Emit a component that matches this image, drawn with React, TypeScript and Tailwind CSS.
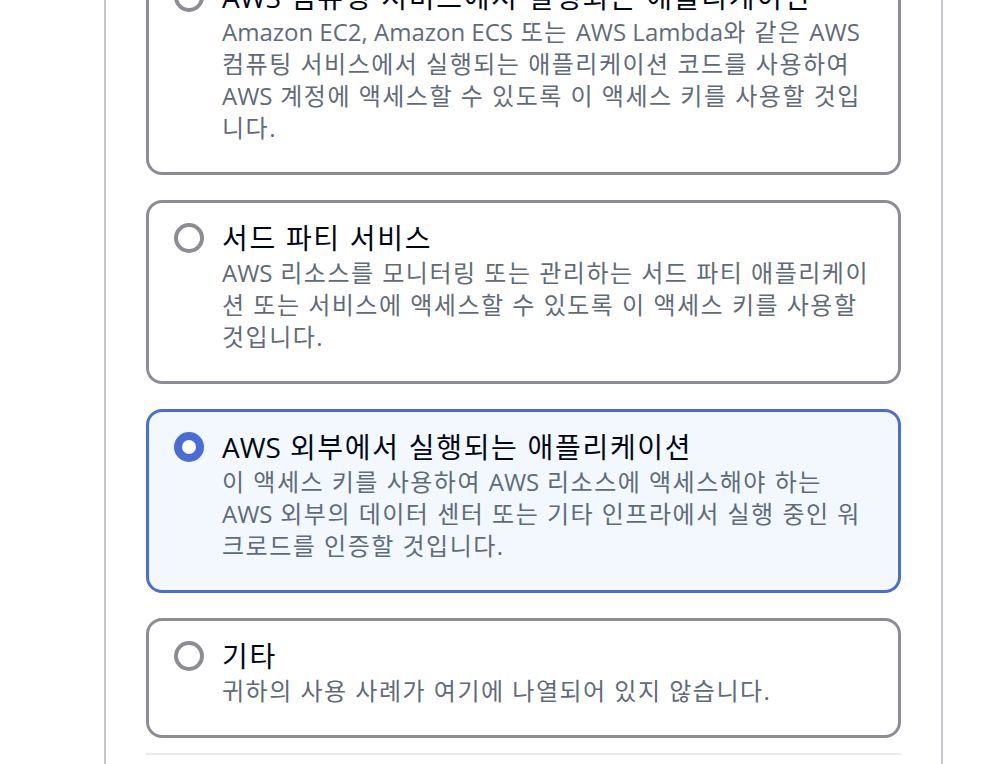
import React from "react";

type Opt = { title: string; desc: string; selected?: boolean };

const options: Opt[] = [
  {
    title: "AWS 컴퓨팅 서비스에서 실행되는 애플리케이션",
    desc: "Amazon EC2, Amazon ECS 또는 AWS Lambda와 같은 AWS 컴퓨팅 서비스에서 실행되는 애플리케이션 코드를 사용하여 AWS 계정에 액세스할 수 있도록 이 액세스 키를 사용할 것입니다.",
  },
  {
    title: "서드 파티 서비스",
    desc: "AWS 리소스를 모니터링 또는 관리하는 서드 파티 애플리케이션 또는 서비스에 액세스할 수 있도록 이 액세스 키를 사용할 것입니다.",
  },
  {
    title: "AWS 외부에서 실행되는 애플리케이션",
    desc: "이 액세스 키를 사용하여 AWS 리소스에 액세스해야 하는 AWS 외부의 데이터 센터 또는 기타 인프라에서 실행 중인 워크로드를 인증할 것입니다.",
    selected: true,
  },
  {
    title: "기타",
    desc: "귀하의 사용 사례가 여기에 나열되어 있지 않습니다.",
  },
];

// Latin runs keep normal spacing; Hangul runs get wider tracking (as in the reference font)
function Mixed({ text }: { text: string }) {
  const parts = text.split(/([A-Za-z0-9,]+(?: [A-Za-z0-9,]+)*)/);
  return (
    <>
      {parts.map((p, i) =>
        i % 2 === 1 ? (
          <span key={i} className="tracking-normal">
            {p}
          </span>
        ) : (
          <React.Fragment key={i}>{p}</React.Fragment>
        )
      )}
    </>
  );
}

function Card({ o }: { o: Opt }) {
  return (
    <div
      className={
        o.selected
          ? "flex rounded-[16px] border-[3px] border-[#4a6cd6] bg-[#f2f8fd] pt-[16px] pb-[28px] pl-[25px] pr-[25px]"
          : "flex rounded-[16px] border-[3px] border-[#8c8c94] bg-white pt-[16px] pb-[28px] pl-[25px] pr-[25px]"
      }
    >
      <div className="mt-[4px] shrink-0">
        {o.selected ? (
          <div className="flex h-[30px] w-[30px] items-center justify-center rounded-full bg-[#4a6cd6]">
            <div className="h-[14px] w-[14px] rounded-full bg-white" />
          </div>
        ) : (
          <div className="h-[30px] w-[30px] rounded-full border-[4px] border-[#8c8c94] bg-white" />
        )}
      </div>
      <div className="ml-[18px] flex-1">
        <div className="text-[28px] leading-[38px] tracking-[1.7px] text-[#000716]">
          <Mixed text={o.title} />
        </div>
        <div className="text-[24px] leading-[32px] tracking-[1.5px] text-[#5f6b7a]">
          <Mixed text={o.desc} />
        </div>
      </div>
    </div>
  );
}

export default function App() {
  return (
    <div
      className="h-[764px] w-[1008px] overflow-hidden bg-white"
      style={{ fontFamily: '"Open Sans", "Noto Sans CJK KR", sans-serif' }}
    >
      <div className="ml-[104px] flex h-[764px] w-[839px] flex-col border-x-2 border-[#c6c6cd] px-[40px]">
        <div className="-mt-[41px] flex flex-col gap-[25px]">
          {options.map((o) => (
            <Card key={o.title} o={o} />
          ))}
        </div>
        <div className="mt-[15px] h-[2px] shrink-0 bg-[#e9ebed]" />
      </div>
    </div>
  );
}
